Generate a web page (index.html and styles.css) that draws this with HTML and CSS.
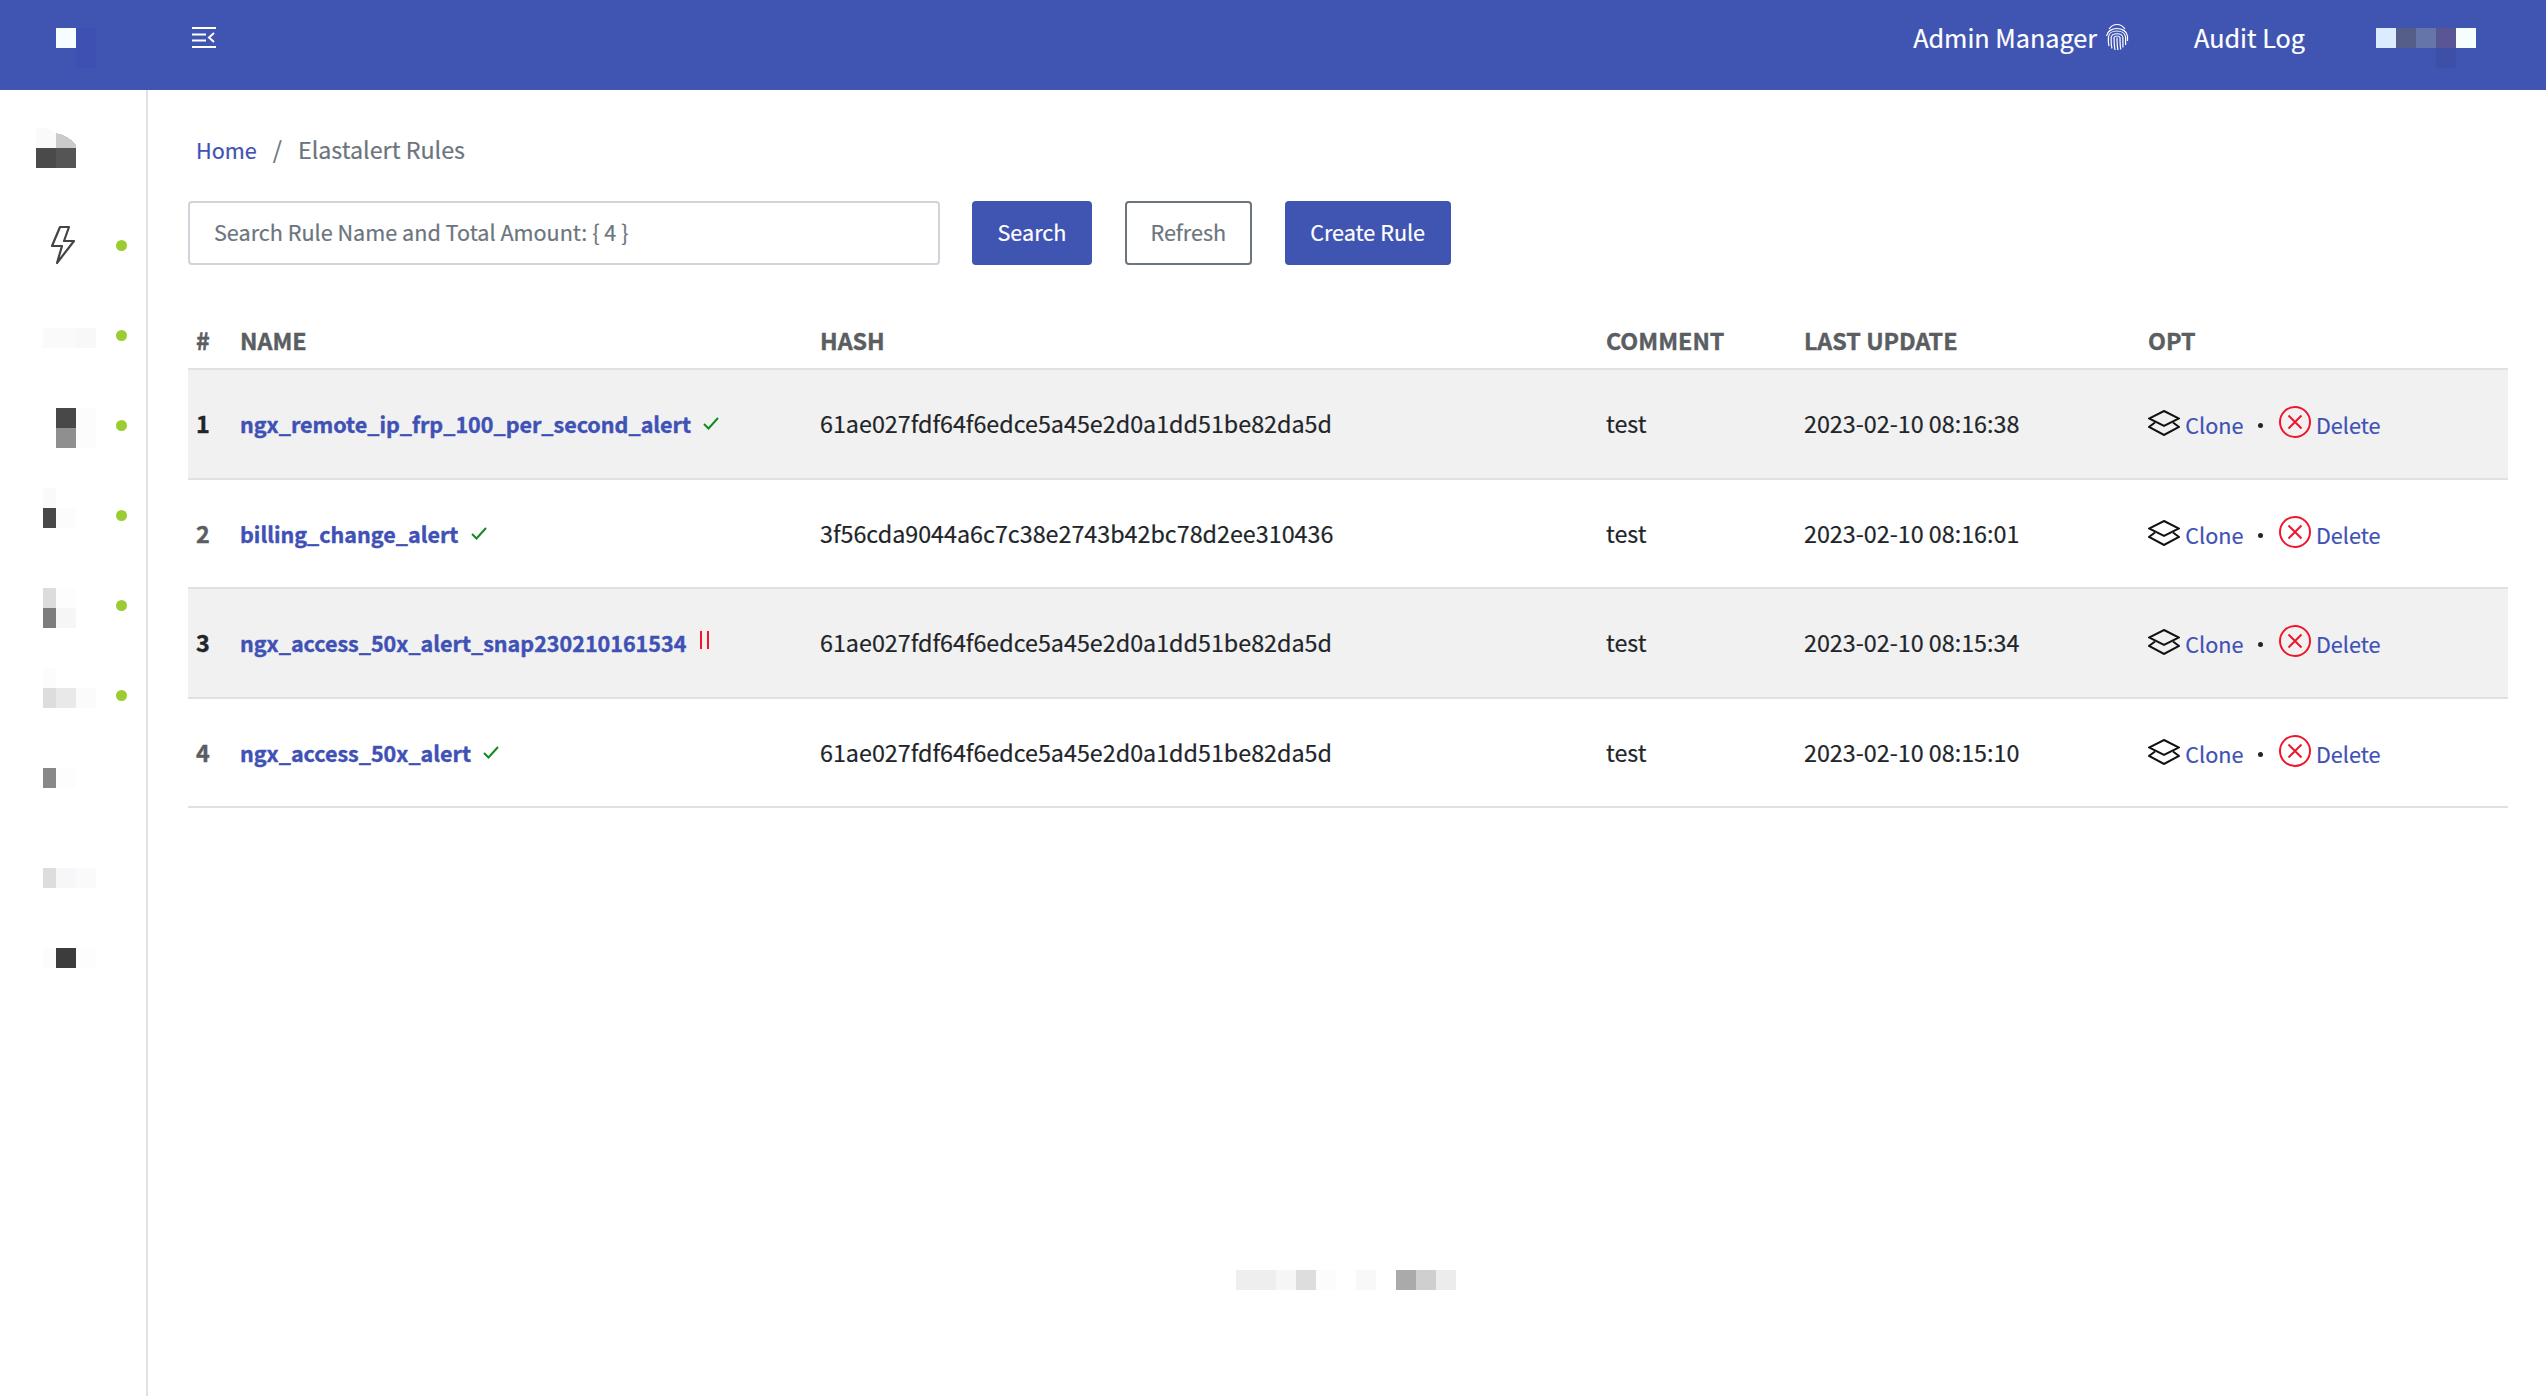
FILE: index.html
```html
<!DOCTYPE html>
<html lang="en">
<head>
  <meta charset="UTF-8" />
  <meta name="viewport" content="width=device-width, initial-scale=1" />
  <title>Elastalert Rules</title>
  <link rel="stylesheet" href="styles.css">
</head>
<body>
  <!-- top bar -->
  <header class="topbar">
    <svg class="brand" width="60" height="60" viewBox="0 0 60 60" shape-rendering="crispEdges">
      <rect x="20" y="0" width="20" height="20" fill="#f5fdff"/>
      <rect x="40" y="0" width="20" height="40" fill="#3e50b2"/>
    </svg>
    <svg class="menu-toggle" width="24" height="21" viewBox="0 0 24 21" fill="none" stroke="#fff" stroke-width="2">
      <path d="M0 1h24M0 7.5h14M0 13.5h14M0 20h24"/>
      <path d="M22 6l-5 4.5 5 4.5"/>
    </svg>
    <nav class="topnav">
      <a class="topnav-item admin" href="#">Admin Manager
        <svg width="24" height="28" viewBox="0 0 24 28" fill="none" stroke="#fff" stroke-width="1.2">
          <path d="M4 6c4-6 12-6 16 0"/>
          <path d="M1.5 13c1.5-10 19.5-10 21 0v5"/>
          <path d="M4 23c-.8-3-.8-6-.6-9 1-8 16-8 17.2 0v8"/>
          <path d="M7 25.5c-.8-3-1-7-.9-11 1-5 10.8-5 11.8 0v10"/>
          <path d="M10 27c-.8-4-1-8-1-12.5 1-2 5-2 6 0 0 5 0 8 .8 12"/>
          <path d="M12 14.5c0 5 .2 9 1 12.5"/>
        </svg>
      </a>
      <a class="topnav-item audit" href="#">Audit Log</a>
      <svg class="user-chip" width="100" height="40" viewBox="0 0 100 40" shape-rendering="crispEdges">
        <rect x="0" width="20" height="20" fill="#dcecff"/>
        <rect x="20" width="20" height="20" fill="#555e88"/>
        <rect x="40" width="20" height="20" fill="#6575aa"/>
        <rect x="60" width="20" height="20" fill="#5a5595"/>
        <rect x="80" width="20" height="20" fill="#f5fdff"/>
        <rect x="60" y="20" width="20" height="20" fill="#3e4fa8"/>
      </svg>
    </nav>
  </header>

  <div class="page">
    <!-- side menu, labels are blurred out in the original -->
    <aside class="sidebar">
      <div class="side-row">
        <svg class="side-icon" viewBox="36 110 60 90" shape-rendering="crispEdges">
          <path d="M36 128h10l10 5v15H36z" fill="#fafafa"/>
          <path d="M56 133c8 1 16 6 20 12v3H56z" fill="#cbcbcb"/>
          <rect x="36" y="148" width="20" height="20" fill="#4a4a4a"/>
          <rect x="56" y="148" width="20" height="20" fill="#555"/>
        </svg>
      </div>
      <div class="side-row">
        <svg class="side-icon" viewBox="36 200 60 90" fill="none" stroke="#444" stroke-width="2.2" stroke-linejoin="round">
          <path d="M60 227h9l-5 14h10l-17 22 5-17H52z"/>
        </svg>
        <span class="status-dot"></span>
      </div>
      <div class="side-row">
        <svg class="side-icon" viewBox="36 290 60 90" shape-rendering="crispEdges">
          <rect x="43" y="328" width="33" height="20" fill="#fafafa"/>
          <rect x="76" y="328" width="20" height="20" fill="#f8f8f8"/>
        </svg>
        <span class="status-dot"></span>
      </div>
      <div class="side-row">
        <svg class="side-icon" viewBox="36 380 60 90" shape-rendering="crispEdges">
          <rect x="56" y="408" width="20" height="20" fill="#484848"/>
          <rect x="56" y="428" width="20" height="20" fill="#8f8f8f"/>
          <rect x="76" y="408" width="20" height="40" fill="#fcfcfc"/>
        </svg>
        <span class="status-dot"></span>
      </div>
      <div class="side-row">
        <svg class="side-icon" viewBox="36 470 60 90" shape-rendering="crispEdges">
          <rect x="43" y="488" width="13" height="20" fill="#fafafa"/>
          <rect x="43" y="508" width="13" height="20" fill="#484848"/>
          <rect x="56" y="508" width="20" height="20" fill="#fcfcfc"/>
        </svg>
        <span class="status-dot"></span>
      </div>
      <div class="side-row">
        <svg class="side-icon" viewBox="36 560 60 90" shape-rendering="crispEdges">
          <rect x="43" y="588" width="13" height="20" fill="#dcdcdc"/>
          <rect x="56" y="588" width="20" height="20" fill="#fdfdfd"/>
          <rect x="43" y="608" width="13" height="20" fill="#7d7d7d"/>
          <rect x="56" y="608" width="20" height="20" fill="#f6f6f6"/>
        </svg>
        <span class="status-dot"></span>
      </div>
      <div class="side-row">
        <svg class="side-icon" viewBox="36 650 60 90" shape-rendering="crispEdges">
          <rect x="43" y="668" width="13" height="20" fill="#fcfcfc"/>
          <rect x="43" y="688" width="13" height="20" fill="#ddd"/>
          <rect x="56" y="688" width="20" height="20" fill="#e9e9e9"/>
          <rect x="76" y="688" width="20" height="20" fill="#fbfbfb"/>
        </svg>
        <span class="status-dot"></span>
      </div>
      <div class="side-row">
        <svg class="side-icon" viewBox="36 740 60 90" shape-rendering="crispEdges">
          <rect x="43" y="768" width="13" height="20" fill="#888"/>
          <rect x="56" y="768" width="20" height="20" fill="#fdfdfd"/>
        </svg>
      </div>
      <div class="side-row">
        <svg class="side-icon" viewBox="36 830 60 90" shape-rendering="crispEdges">
          <rect x="43" y="868" width="13" height="20" fill="#ddd"/>
          <rect x="56" y="868" width="20" height="20" fill="#f7f7f9"/>
          <rect x="76" y="868" width="20" height="20" fill="#fafafa"/>
        </svg>
      </div>
      <div class="side-row">
        <svg class="side-icon" viewBox="36 920 60 90" shape-rendering="crispEdges">
          <rect x="43" y="948" width="13" height="20" fill="#fcfcfc"/>
          <rect x="56" y="948" width="20" height="20" fill="#3c3c3c"/>
          <rect x="76" y="948" width="20" height="20" fill="#fdfdfd"/>
        </svg>
      </div>
    </aside>

    <main class="content">
      <!-- breadcrumb -->
      <div class="breadcrumb">
        <a href="#">Home</a>
        <span class="crumb-sep">/</span>
        <span class="crumb-current">Elastalert Rules</span>
      </div>

      <!-- search and actions -->
      <div class="toolbar">
        <input class="search-input" type="text" placeholder="Search Rule Name and Total Amount: { 4 }" />
        <button class="btn btn-primary btn-search">Search</button>
        <button class="btn btn-outline">Refresh</button>
        <button class="btn btn-primary">Create Rule</button>
      </div>

      <table class="rules">
        <colgroup>
          <col class="col-num"><col class="col-name"><col class="col-hash"><col class="col-comment"><col class="col-update"><col class="col-opt">
        </colgroup>
        <thead>
          <tr><th>#</th><th>NAME</th><th>HASH</th><th>COMMENT</th><th>LAST UPDATE</th><th>OPT</th></tr>
        </thead>
        <tbody>
          <tr>
            <td class="num">1</td>
            <td><a class="rule-name" href="#">ngx_remote_ip_frp_100_per_second_alert</a>
              <svg class="state" width="16" height="13" viewBox="0 0 16 13" fill="none" stroke="#118a1e" stroke-width="2"><path d="M1 7l4.5 4.5L15 1"/></svg></td>
            <td>61ae027fdf64f6edce5a45e2d0a1dd51be82da5d</td>
            <td>test</td>
            <td>2023-02-10 08:16:38</td>
            <td class="opt">
              <svg class="ico-layers" width="32" height="26" viewBox="0 0 32 26" fill="none" stroke="#111" stroke-width="2"><path d="M16 1l15 7.5-15 7.5L1 8.5z"/><path d="M7 12.5l-6 4.5 15 8 15-8-6-4.5"/></svg>
              <a href="#">Clone</a>
              <span class="opt-dot"></span>
              <svg class="ico-del" width="32" height="32" viewBox="0 0 32 32" fill="none" stroke="#f0142d" stroke-width="2"><circle cx="16" cy="16" r="15"/><path d="M9.5 9.5l13 13M22.5 9.5l-13 13"/></svg>
              <a href="#">Delete</a>
            </td>
          </tr>
          <tr>
            <td class="num">2</td>
            <td><a class="rule-name" href="#">billing_change_alert</a>
              <svg class="state" width="16" height="13" viewBox="0 0 16 13" fill="none" stroke="#118a1e" stroke-width="2"><path d="M1 7l4.5 4.5L15 1"/></svg></td>
            <td>3f56cda9044a6c7c38e2743b42bc78d2ee310436</td>
            <td>test</td>
            <td>2023-02-10 08:16:01</td>
            <td class="opt">
              <svg class="ico-layers" width="32" height="26" viewBox="0 0 32 26" fill="none" stroke="#111" stroke-width="2"><path d="M16 1l15 7.5-15 7.5L1 8.5z"/><path d="M7 12.5l-6 4.5 15 8 15-8-6-4.5"/></svg>
              <a href="#">Clone</a>
              <span class="opt-dot"></span>
              <svg class="ico-del" width="32" height="32" viewBox="0 0 32 32" fill="none" stroke="#f0142d" stroke-width="2"><circle cx="16" cy="16" r="15"/><path d="M9.5 9.5l13 13M22.5 9.5l-13 13"/></svg>
              <a href="#">Delete</a>
            </td>
          </tr>
          <tr>
            <td class="num">3</td>
            <td><a class="rule-name" href="#">ngx_access_50x_alert_snap230210161534</a>
              <svg class="state" width="11" height="18" viewBox="0 0 11 18" fill="none" stroke="#f0142d" stroke-width="2"><path d="M2 0v18M9 0v18"/></svg></td>
            <td>61ae027fdf64f6edce5a45e2d0a1dd51be82da5d</td>
            <td>test</td>
            <td>2023-02-10 08:15:34</td>
            <td class="opt">
              <svg class="ico-layers" width="32" height="26" viewBox="0 0 32 26" fill="none" stroke="#111" stroke-width="2"><path d="M16 1l15 7.5-15 7.5L1 8.5z"/><path d="M7 12.5l-6 4.5 15 8 15-8-6-4.5"/></svg>
              <a href="#">Clone</a>
              <span class="opt-dot"></span>
              <svg class="ico-del" width="32" height="32" viewBox="0 0 32 32" fill="none" stroke="#f0142d" stroke-width="2"><circle cx="16" cy="16" r="15"/><path d="M9.5 9.5l13 13M22.5 9.5l-13 13"/></svg>
              <a href="#">Delete</a>
            </td>
          </tr>
          <tr>
            <td class="num">4</td>
            <td><a class="rule-name" href="#">ngx_access_50x_alert</a>
              <svg class="state" width="16" height="13" viewBox="0 0 16 13" fill="none" stroke="#118a1e" stroke-width="2"><path d="M1 7l4.5 4.5L15 1"/></svg></td>
            <td>61ae027fdf64f6edce5a45e2d0a1dd51be82da5d</td>
            <td>test</td>
            <td>2023-02-10 08:15:10</td>
            <td class="opt">
              <svg class="ico-layers" width="32" height="26" viewBox="0 0 32 26" fill="none" stroke="#111" stroke-width="2"><path d="M16 1l15 7.5-15 7.5L1 8.5z"/><path d="M7 12.5l-6 4.5 15 8 15-8-6-4.5"/></svg>
              <a href="#">Clone</a>
              <span class="opt-dot"></span>
              <svg class="ico-del" width="32" height="32" viewBox="0 0 32 32" fill="none" stroke="#f0142d" stroke-width="2"><circle cx="16" cy="16" r="15"/><path d="M9.5 9.5l13 13M22.5 9.5l-13 13"/></svg>
              <a href="#">Delete</a>
            </td>
          </tr>
        </tbody>
      </table>

      <!-- footer text, blurred out in the original -->
      <footer class="footer">
        <svg width="220" height="20" viewBox="0 0 220 20" shape-rendering="crispEdges">
          <rect x="0" width="40" height="20" fill="#eee"/>
          <rect x="40" width="20" height="20" fill="#f6f6f6"/>
          <rect x="60" width="20" height="20" fill="#ddd"/>
          <rect x="80" width="20" height="20" fill="#fcfcfc"/>
          <rect x="120" width="20" height="20" fill="#f8f8f8"/>
          <rect x="160" width="20" height="20" fill="#aaa"/>
          <rect x="180" width="20" height="20" fill="#cfcfcf"/>
          <rect x="200" width="20" height="20" fill="#ececec"/>
        </svg>
      </footer>
    </main>
  </div>
</body>
</html>
```

FILE: styles.css
```css
* {
  box-sizing: border-box;
}

html, body {
  height: 100%;
}

body {
  margin: 0;
  background-color: #fff;
  color: #212529;
  font-family: "Noto Sans CJK SC", "Noto Sans", sans-serif;
  font-size: 23.3px;
  -webkit-text-stroke: 0.2px;
  overflow: hidden;
}

a {
  color: #3f51b5;
  text-decoration: none;
  font-size: 21.6px;
}

/* top bar */
.topbar {
  display: flex;
  align-items: flex-start;
  height: 90px;
  background-color: #4054b2;
  color: #fff;
}

.brand {
  margin: 28px 0 0 36px;
  flex: none;
}

.menu-toggle {
  margin: 27px 0 0 96px;
  flex: none;
}

.topnav {
  display: flex;
  align-items: flex-start;
  margin-left: auto;
  padding-right: 70px;
}

.topnav-item {
  display: flex;
  align-items: center;
  gap: 8px;
  height: 74px;
  color: #fff;
  font-size: 25.2px;
}

.audit {
  margin-left: 65px;
}

.user-chip {
  margin: 28px 0 0 71px;
}

/* side menu */
.page {
  display: flex;
  height: calc(100% - 90px);
}

.sidebar {
  flex: none;
  width: 148px;
  padding-top: 20px;
  border-right: 2px solid #dee2e6;
}

.side-row {
  display: flex;
  align-items: center;
  height: 90px;
  padding-left: 36px;
}

.side-icon {
  width: 60px;
  height: 90px;
  flex: none;
}

.status-dot {
  width: 11px;
  height: 11px;
  margin-left: 20px;
  border-radius: 50%;
  background-color: #9acd32;
}

/* main column */
.content {
  flex: 1;
  display: flex;
  flex-direction: column;
  min-width: 0;
  padding: 0 38px 0 40px;
}

.breadcrumb {
  display: flex;
  align-items: center;
  height: 42px;
  margin-top: 38px;
  padding-left: 8px;
}

.crumb-sep {
  margin: 0 16px;
  color: #6c757d;
}

.crumb-current {
  color: #6c757d;
}

.toolbar {
  display: flex;
  margin-top: 31px;
}

.search-input {
  width: 752px;
  height: 64px;
  padding: 0 24px 3px;
  border: 2px solid #ced4da;
  border-radius: 4px;
  font: inherit;
  font-size: 21.6px;
  color: #495057;
}

.search-input::placeholder {
  color: #6c757d;
  opacity: 1;
}

.btn {
  height: 64px;
  padding: 0 23.5px 3px;
  border: 2px solid #6c757d;
  border-radius: 4px;
  background: none;
  color: #6c757d;
  font: inherit;
  font-size: 21.6px;
  margin-left: 33px;
}

.btn-search {
  margin-left: 32px;
}

.btn-primary {
  border-color: #4054b2;
  background-color: #4054b2;
  color: #fff;
}

/* rules table */
.rules {
  width: 2320px;
  margin-top: 49px;
  table-layout: fixed;
  border-collapse: collapse;
}

.col-num { width: 44px; }
.col-name { width: 580px; }
.col-hash { width: 786px; }
.col-comment { width: 198px; }
.col-update { width: 344px; }
.col-opt { width: 368px; }

.rules th {
  height: 55px;
  padding: 0 8px 2px;
  border-bottom: 2px solid #dee2e6;
  color: #5a5e62;
  font-weight: 700;
  text-align: left;
  -webkit-text-stroke: 0.4px;
}

.rules td {
  height: 110px;
  padding: 0 8px 2px;
  border-bottom: 2px solid #dee2e6;
  white-space: nowrap;
}

.rules tbody tr:nth-child(even) td {
  height: 109px;
}

.rules tbody tr:nth-child(odd) {
  background-color: #f1f1f1;
}

.rules .num {
  font-weight: 700;
  -webkit-text-stroke: 0.4px;
}

.rules tbody tr:nth-child(even) .num {
  color: #5a5e62;
}

.rule-name {
  font-size: 21.5px;
  font-weight: 700;
  -webkit-text-stroke: 0.4px;
}

.state {
  margin-left: 7px;
  vertical-align: 3px;
}

.opt a {
  position: relative;
  top: 1px;
}

.ico-layers {
  vertical-align: -3px;
}

.opt-dot {
  display: inline-block;
  width: 5px;
  height: 5px;
  margin: 0 11px 0 9px;
  border-radius: 50%;
  background-color: #212529;
  vertical-align: 5px;
}

.ico-del {
  vertical-align: -5px;
}

.footer {
  margin-top: auto;
  padding: 0 0 106px 1048px;
  line-height: 0;
}
```
